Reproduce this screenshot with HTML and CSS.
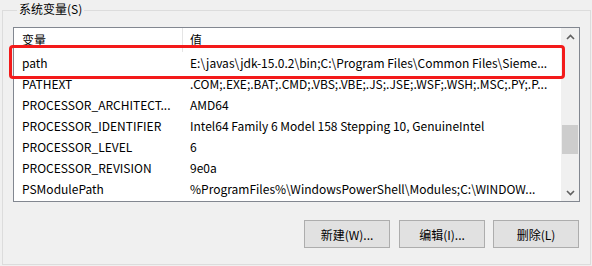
FILE: index.html
```html
<!DOCTYPE html>
<html lang="zh-CN">
<head>
<meta charset="utf-8">
<title>系统变量</title>
<link rel="stylesheet" href="styles.css">
</head>
<body>
<fieldset class="group">
  <legend class="group-title">系统变量(S)</legend>
  <div class="listbox">
    <div class="table">
      <div class="row head">
        <div class="cell name">变量</div>
        <div class="cell value">值</div>
      </div>
      <div class="row">
        <div class="cell name">path</div>
        <div class="cell value">E:\javas\jdk-15.0.2\bin;C:\Program Files\Common Files\Sieme...</div>
      </div>
      <div class="row">
        <div class="cell name">PATHEXT</div>
        <div class="cell value">.COM;.EXE;.BAT;.CMD;.VBS;.VBE;.JS;.JSE;.WSF;.WSH;.MSC;.PY;.P...</div>
      </div>
      <div class="row">
        <div class="cell name">PROCESSOR_ARCHITECT...</div>
        <div class="cell value">AMD64</div>
      </div>
      <div class="row">
        <div class="cell name">PROCESSOR_IDENTIFIER</div>
        <div class="cell value">Intel64 Family 6 Model 158 Stepping 10, GenuineIntel</div>
      </div>
      <div class="row">
        <div class="cell name">PROCESSOR_LEVEL</div>
        <div class="cell value">6</div>
      </div>
      <div class="row">
        <div class="cell name">PROCESSOR_REVISION</div>
        <div class="cell value">9e0a</div>
      </div>
      <div class="row">
        <div class="cell name">PSModulePath</div>
        <div class="cell value">%ProgramFiles%\WindowsPowerShell\Modules;C:\WINDOW...</div>
      </div>
    </div>
    <div class="scrollbar">
      <div class="sb-btn">
        <svg width="9" height="6" viewBox="0 0 9 6"><polyline points="1,5 4.5,1.5 8,5" fill="none" stroke="#606060" stroke-width="1.6"/></svg>
      </div>
      <div class="sb-track"><div class="sb-thumb"></div></div>
      <div class="sb-btn">
        <svg width="9" height="6" viewBox="0 0 9 6"><polyline points="1,1 4.5,4.5 8,1" fill="none" stroke="#606060" stroke-width="1.6"/></svg>
      </div>
    </div>
    <div class="highlight"></div>
  </div>
  <div class="buttons">
    <button class="btn btn-new">新建(W)...</button>
    <button class="btn">编辑(I)...</button>
    <button class="btn">删除(L)</button>
  </div>
</fieldset>
</body>
</html>
```

FILE: styles.css
```css
html, body {
  margin: 0;
  padding: 0;
}
body {
  width: 592px;
  height: 266px;
  overflow: hidden;
  background: #f0f0f0;
  font-family: "Noto Sans CJK SC", "Noto Sans", sans-serif;
  font-size: 12px;
  color: #000;
}
.group {
  margin: 0 1px 0 2px;
  padding: 0 10px 16px 10px;
  border: 1px solid #dcdcdc;
  min-width: 0;
}
.group-title {
  margin-left: 4px;
  padding: 0 2px 3px 2px;
  line-height: 17px;
  font-size: 12px;
}
.listbox {
  position: relative;
  margin-top: 7px;
  height: 173px;
  border: 1px solid #828790;
  background: #fff;
  display: flex;
}
.table {
  flex: 1;
  min-width: 0;
  overflow: hidden;
}
.row {
  display: grid;
  grid-template-columns: 169px 1fr;
  height: 21px;
  line-height: 21px;
}
.row.head {
  height: 24px;
  line-height: 24px;
}
.cell {
  white-space: nowrap;
  overflow: hidden;
}
.cell.name {
  padding-left: 8px;
}
.head .cell.name {
  border-right: 1px solid #e5e5e5;
}
.cell.value {
  padding-left: 7px;
}
.scrollbar {
  width: 18px;
  background: #f0f0f0;
  display: flex;
  flex-direction: column;
}
.sb-btn {
  height: 17px;
  display: flex;
  align-items: center;
  justify-content: center;
}
.sb-track {
  flex: 1;
}
.sb-thumb {
  margin: 80px 1px 0 1px;
  height: 29px;
  background: #cdcdcd;
}
.highlight {
  position: absolute;
  left: -5px;
  top: 17px;
  width: 556px;
  height: 34px;
  box-sizing: border-box;
  border: 3px solid #f31a1a;
  border-radius: 4px;
}
.buttons {
  display: flex;
  justify-content: flex-end;
  gap: 8px;
  margin-top: 18px;
  padding-right: 1px;
}
.btn {
  width: 86px;
  height: 28px;
  box-sizing: border-box;
  border: 1px solid #adadad;
  background: #e1e1e1;
  font-family: "Noto Sans CJK SC", "Noto Sans", sans-serif;
  font-size: 12px;
  color: #000;
  padding: 0;
}
.btn-new {
  margin-right: 1px;
}
```
